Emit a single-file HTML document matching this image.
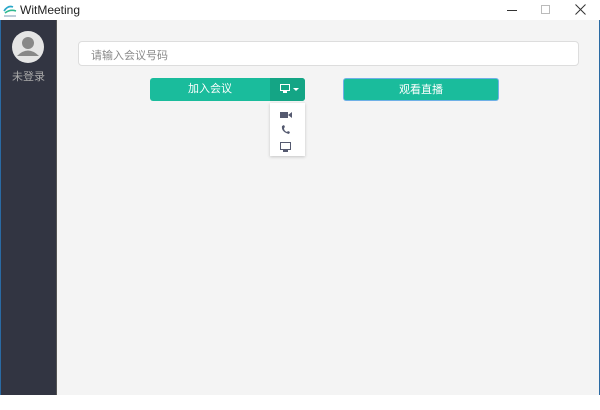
<!DOCTYPE html>
<html><head><meta charset="utf-8"><style>
*{margin:0;padding:0;box-sizing:border-box}
body{width:600px;height:410px;background:#fff;font-family:"Liberation Sans","Noto Sans CJK SC",sans-serif;position:relative;overflow:hidden}
.abs{position:absolute}
</style></head><body>
<div class="abs" style="left:0;top:0;width:600px;height:20px;background:#fff"></div>
<svg class="abs" style="left:2px;top:3px" width="16" height="15" viewBox="0 0 16 15">
<path d="M2 8 Q6 2 11 4" stroke="#2aa7c9" stroke-width="1.6" fill="none"/>
<path d="M3 10 Q8 6 14 8" stroke="#2fb98f" stroke-width="1.6" fill="none"/>
<path d="M2 13 H14" stroke="#7a9bb5" stroke-width="1"/>
</svg>
<div class="abs" style="left:20px;top:3px;font-size:12px;color:#222">WitMeeting</div>
<div class="abs" style="left:507px;top:10px;width:10px;height:1px;background:#333"></div>
<div class="abs" style="left:541px;top:5px;width:9px;height:9px;border:1px solid #bbb"></div>
<svg class="abs" style="left:575px;top:4px" width="11" height="11"><path d="M0.5 0.5L10.5 10.5M10.5 0.5L0.5 10.5" stroke="#333" stroke-width="1"/></svg>
<div class="abs" style="left:0;top:20px;width:600px;height:375px;background:#f4f4f4;border-left:1px solid #2a6aa3;border-right:1px solid #2a6aa3"></div>
<div class="abs" style="left:1px;top:20px;width:56px;height:375px;background:#323542;border-right:1px solid #555"></div>
<svg class="abs" style="left:12px;top:31px" width="32" height="32" viewBox="0 0 32 32">
<circle cx="16" cy="16" r="16" fill="#e5e5e5"/>
<circle cx="16" cy="12" r="6" fill="#888"/>
<path d="M5 25 Q16 14 27 25 Z" fill="#888"/>
</svg>
<div class="abs" style="left:0;top:68px;width:57px;text-align:center;font-size:11px;color:#aaa">未登录</div>
<div class="abs" style="left:78px;top:41px;width:501px;height:25px;background:#fff;border:1px solid #ddd;border-radius:4px;font-size:11px;color:#888;padding:5px 12px">请输入会议号码</div>
<div class="abs" style="left:150px;top:78px;width:155px;height:23px;background:#1abc9c;border-radius:3px"></div>
<div class="abs" style="left:270px;top:78px;width:35px;height:23px;background:#14a585;border-radius:0 3px 3px 0"></div>
<div class="abs" style="left:150px;top:78px;width:120px;height:23px;line-height:22px;text-align:center;font-size:11px;color:#fff">加入会议</div>
<svg class="abs" style="left:280px;top:84px" width="20" height="10"><rect x="0.5" y="0.5" width="9" height="6" fill="none" stroke="#fff"/><rect x="3" y="7" width="4" height="2" fill="#fff"/><path d="M13 4H19L16 7Z" fill="#fff"/></svg>
<div class="abs" style="left:343px;top:78px;width:156px;height:23px;background:#1abc9c;border:1px solid #6fb0e6;border-radius:3px;text-align:center;font-size:11px;color:#fff;line-height:22px">观看直播</div>
<div class="abs" style="left:270px;top:103px;width:35px;height:53px;background:#fff;box-shadow:0 1px 3px rgba(0,0,0,.2)"></div>
<svg class="abs" style="left:280px;top:111px" width="12" height="8"><rect x="0" y="1" width="8" height="6" fill="#555a70"/><path d="M8 4L12 1V7Z" fill="#555a70"/></svg>
<svg class="abs" style="left:281px;top:125px" width="10" height="10"><path d="M1 1Q0 7 8 9L9 7L7 6L6 7Q3 6 3 3L4 2L3 0Z" fill="#555a70"/></svg>
<svg class="abs" style="left:280px;top:142px" width="11" height="10"><rect x="0.5" y="0.5" width="10" height="7" fill="none" stroke="#555a70"/><rect x="3" y="8" width="5" height="2" fill="#555a70"/></svg>
</body></html>
